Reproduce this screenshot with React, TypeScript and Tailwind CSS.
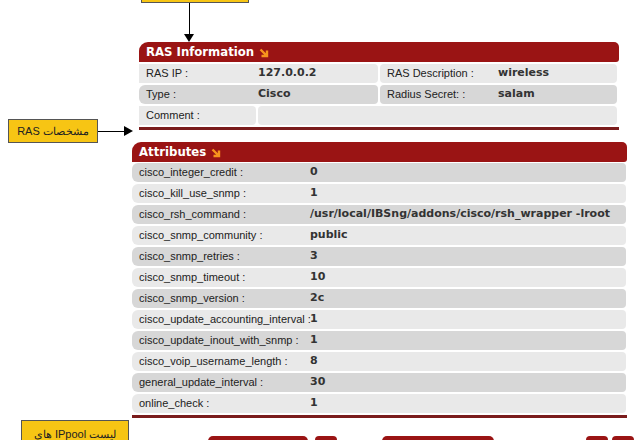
import React from "react";

const RED = "bg-[#9a1414]";

function HeadIcon() {
  return (
    <svg width="10" height="10" viewBox="0 0 10 10" className="ml-[5px] mt-[1px]">
      <path d="M1.5 1.5 L8 8 M8 2.5 V8 H2.5" stroke="#f7941d" strokeWidth="2.4" fill="none" />
    </svg>
  );
}

function Header({ title }: { title: string }) {
  return (
    <div className={`${RED} h-[20px] rounded-tl-[9px] rounded-tr-[5px] rounded-br-[3px] flex items-center pl-[7px] text-white font-bold text-[13px] [font-family:'DejaVu_Sans_Condensed','Liberation_Sans',sans-serif]`}>
      <span>{title}</span>
      <HeadIcon />
    </div>
  );
}

const attrs: [string, string][] = [
  ["cisco_integer_credit :", "0"],
  ["cisco_kill_use_snmp :", "1"],
  ["cisco_rsh_command :", "/usr/local/IBSng/addons/cisco/rsh_wrapper -lroot"],
  ["cisco_snmp_community :", "public"],
  ["cisco_snmp_retries :", "3"],
  ["cisco_snmp_timeout :", "10"],
  ["cisco_snmp_version :", "2c"],
  ["cisco_update_accounting_interval :", "1"],
  ["cisco_update_inout_with_snmp :", "1"],
  ["cisco_voip_username_length :", "8"],
  ["general_update_interval :", "30"],
  ["online_check :", "1"],
];

const label = "text-[11px] text-[#222] [font-family:'Liberation_Sans',Arial,sans-serif]";
const value = "text-[11px] font-bold text-[#333] [font-family:'DejaVu_Sans',sans-serif]";

export default function App() {
  return (
    <div className="relative w-[642px] h-[440px] overflow-hidden bg-white">
      {/* annotations */}
      <div className="absolute left-[141px] top-[-20px] w-[108px] h-[23px] bg-[#f7c514] border border-[#555]" />
      <div className="absolute left-[189px] top-[3px] w-[1px] h-[33px] bg-black" />
      <div className="absolute left-[184px] top-[34px] w-0 h-0 border-l-[5px] border-r-[5px] border-t-[8px] border-l-transparent border-r-transparent border-t-black" />

      <div className="absolute left-[8px] top-[119px] w-[90px] h-[24px] bg-[#f7c514] border border-[#555] flex items-center justify-center text-[11px] text-[#222] [font-family:'Liberation_Sans',Arial,sans-serif]" dir="rtl">
        مشخصات RAS
      </div>
      <div className="absolute left-[98px] top-[131px] w-[28px] h-[1px] bg-black" />
      <div className="absolute left-[124px] top-[126px] w-0 h-0 border-t-[5px] border-b-[5px] border-l-[9px] border-t-transparent border-b-transparent border-l-black" />

      <div className="absolute left-[21px] top-[420px] w-[108px] h-[30px] bg-[#f7c514] border border-[#555] flex items-start justify-center pt-[5px] text-[11px] text-[#222] [font-family:'Liberation_Sans',Arial,sans-serif]" dir="rtl">
        لیست IPpool های
      </div>

      <div className="flex flex-col pt-[42px]">
        {/* RAS Information */}
        <div className="ml-[139px] w-[480px] flex flex-col">
          <Header title="RAS Information" />
          <div className="flex flex-col gap-[2px] mt-[2px] pr-[2px]">
            <div className="flex gap-[2px] h-[19px]">
              <div className="w-[239px] bg-[#e9e9e9] rounded-r-[4px] flex items-center">
                <span className={`${label} w-[119px] pl-[7px]`}>RAS IP :</span>
                <span className={value}>127.0.0.2</span>
              </div>
              <div className="flex-1 bg-[#e9e9e9] rounded-[4px] flex items-center">
                <span className={`${label} w-[118px] pl-[7px]`}>RAS Description :</span>
                <span className={value}>wireless</span>
              </div>
            </div>
            <div className="flex gap-[2px] h-[19px]">
              <div className="w-[239px] bg-[#d7d7d7] rounded-l-[6px] rounded-r-[4px] flex items-center">
                <span className={`${label} w-[119px] pl-[7px]`}>Type :</span>
                <span className={value}>Cisco</span>
              </div>
              <div className="flex-1 bg-[#d7d7d7] rounded-[4px] flex items-center">
                <span className={`${label} w-[118px] pl-[7px]`}>Radius Secret: :</span>
                <span className={value}>salam</span>
              </div>
            </div>
            <div className="flex gap-[2px] h-[19px]">
              <div className="w-[117px] bg-[#e9e9e9] rounded-r-[4px] flex items-center">
                <span className={`${label} pl-[7px]`}>Comment :</span>
              </div>
              <div className="flex-1 bg-[#e9e9e9] rounded-[4px]" />
            </div>
          </div>
          <div className="h-[3px] bg-[#7a1c1c] mt-[2px]" />
        </div>

        {/* Attributes */}
        <div className="ml-[132px] w-[495px] flex flex-col mt-[12px]">
          <Header title="Attributes" />
          <div className="flex flex-col gap-[2px] mt-[1px] pr-[1px]">
            {attrs.map(([k, v], i) => (
              <div
                key={k}
                className={`h-[19px] flex items-center rounded-l-[6px] rounded-r-[4px] ${i % 2 === 0 ? "bg-[#d7d7d7]" : "bg-[#e9e9e9]"}`}
              >
                <span className={`${label} w-[178px] pl-[7px] whitespace-nowrap`}>{k}</span>
                <span className={`${value} whitespace-nowrap`}>{v}</span>
              </div>
            ))}
          </div>
          <div className="h-[3px] bg-[#7a1c1c] mt-[2px]" />
        </div>

        {/* bottom buttons */}
        <div className="flex items-start mt-[18px] h-[20px]">
          <div className={`ml-[208px] w-[100px] h-[20px] ${RED} rounded-t-[5px]`} />
          <div className={`ml-[7px] w-[22px] h-[20px] ${RED} rounded-t-[4px]`} />
          <div className={`ml-[45px] w-[112px] h-[20px] ${RED} rounded-t-[5px]`} />
          <div className={`ml-[92px] w-[22px] h-[20px] ${RED} rounded-t-[4px]`} />
          <div className={`ml-[4px] w-[22px] h-[20px] ${RED} rounded-t-[4px]`} />
        </div>
      </div>
    </div>
  );
}
